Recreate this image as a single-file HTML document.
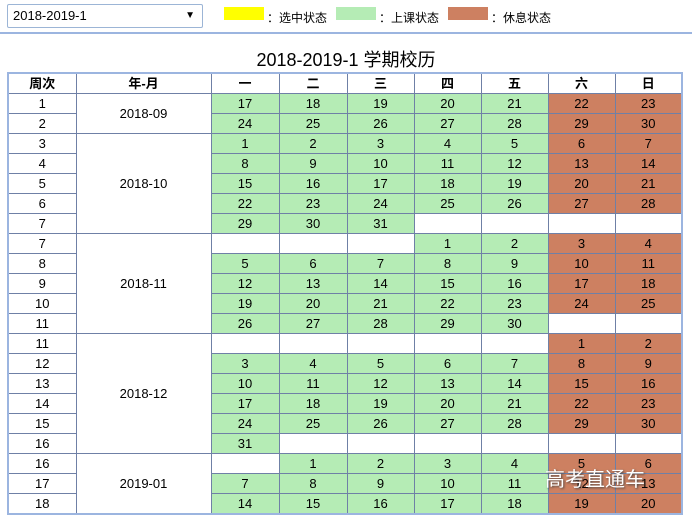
<!DOCTYPE html>
<html><head><meta charset="utf-8"><style>
body{margin:0;width:692px;height:515px;background:#fff;font-family:"Liberation Sans","Noto Sans CJK SC",sans-serif;position:relative;overflow:hidden;color:#000}
.sel{position:absolute;left:7px;top:4px;border:1px solid #9cb5d6;border-radius:2px;font-size:13px;line-height:22px;padding-left:5px;box-sizing:border-box;width:196px;height:24px}
.sel span{position:absolute;right:7px;top:0;font-size:10px}
.lb{position:absolute;top:7px;width:40px;height:13px}
.lt{position:absolute;top:9px;font-size:12px}
.hr{position:absolute;left:0;top:32px;width:692px;height:2px;background:#9cb5e0}
.title{position:absolute;left:0;width:692px;top:46px;text-align:center;font-size:18px}
table{position:absolute;left:7px;top:72px;border-collapse:collapse;border:2px solid #9cb5e0;table-layout:fixed;font-size:13px}
td,th{border:1px solid #6f80a6;height:19px;padding:0;text-align:center;line-height:18px}
th{font-weight:bold}
.g{background:#b5ecb5}.r{background:#cd8061}
.wm{position:absolute;left:545px;top:463px;font-size:20px;color:#fff;text-shadow:1px 1px 2px #444}
</style></head><body>
<div class="sel">2018-2019-1<span>▼</span></div>
<div class="lb" style="left:224px;background:#ffff00"></div><div class="lt" style="left:267px">：选中状态</div>
<div class="lb" style="left:336px;background:#b5ecb5"></div><div class="lt" style="left:379px">：上课状态</div>
<div class="lb" style="left:448px;background:#cd8061"></div><div class="lt" style="left:491px">：休息状态</div>
<div class="hr"></div>
<div class="title">2018-2019-1 学期校历</div>
<table>
<colgroup><col style="width:68px"><col style="width:135px"><col style="width:68px"><col style="width:68px"><col style="width:67px"><col style="width:67px"><col style="width:67px"><col style="width:67px"><col style="width:67px"></colgroup>
<tr><th>周次</th><th>年-月</th><th>一</th><th>二</th><th>三</th><th>四</th><th>五</th><th>六</th><th>日</th></tr>
<tr><td>1</td><td rowspan="2">2018-09</td><td class="g">17</td><td class="g">18</td><td class="g">19</td><td class="g">20</td><td class="g">21</td><td class="r">22</td><td class="r">23</td></tr>
<tr><td>2</td><td class="g">24</td><td class="g">25</td><td class="g">26</td><td class="g">27</td><td class="g">28</td><td class="r">29</td><td class="r">30</td></tr>
<tr><td>3</td><td rowspan="5">2018-10</td><td class="g">1</td><td class="g">2</td><td class="g">3</td><td class="g">4</td><td class="g">5</td><td class="r">6</td><td class="r">7</td></tr>
<tr><td>4</td><td class="g">8</td><td class="g">9</td><td class="g">10</td><td class="g">11</td><td class="g">12</td><td class="r">13</td><td class="r">14</td></tr>
<tr><td>5</td><td class="g">15</td><td class="g">16</td><td class="g">17</td><td class="g">18</td><td class="g">19</td><td class="r">20</td><td class="r">21</td></tr>
<tr><td>6</td><td class="g">22</td><td class="g">23</td><td class="g">24</td><td class="g">25</td><td class="g">26</td><td class="r">27</td><td class="r">28</td></tr>
<tr><td>7</td><td class="g">29</td><td class="g">30</td><td class="g">31</td><td></td><td></td><td></td><td></td></tr>
<tr><td>7</td><td rowspan="5">2018-11</td><td></td><td></td><td></td><td class="g">1</td><td class="g">2</td><td class="r">3</td><td class="r">4</td></tr>
<tr><td>8</td><td class="g">5</td><td class="g">6</td><td class="g">7</td><td class="g">8</td><td class="g">9</td><td class="r">10</td><td class="r">11</td></tr>
<tr><td>9</td><td class="g">12</td><td class="g">13</td><td class="g">14</td><td class="g">15</td><td class="g">16</td><td class="r">17</td><td class="r">18</td></tr>
<tr><td>10</td><td class="g">19</td><td class="g">20</td><td class="g">21</td><td class="g">22</td><td class="g">23</td><td class="r">24</td><td class="r">25</td></tr>
<tr><td>11</td><td class="g">26</td><td class="g">27</td><td class="g">28</td><td class="g">29</td><td class="g">30</td><td></td><td></td></tr>
<tr><td>11</td><td rowspan="6">2018-12</td><td></td><td></td><td></td><td></td><td></td><td class="r">1</td><td class="r">2</td></tr>
<tr><td>12</td><td class="g">3</td><td class="g">4</td><td class="g">5</td><td class="g">6</td><td class="g">7</td><td class="r">8</td><td class="r">9</td></tr>
<tr><td>13</td><td class="g">10</td><td class="g">11</td><td class="g">12</td><td class="g">13</td><td class="g">14</td><td class="r">15</td><td class="r">16</td></tr>
<tr><td>14</td><td class="g">17</td><td class="g">18</td><td class="g">19</td><td class="g">20</td><td class="g">21</td><td class="r">22</td><td class="r">23</td></tr>
<tr><td>15</td><td class="g">24</td><td class="g">25</td><td class="g">26</td><td class="g">27</td><td class="g">28</td><td class="r">29</td><td class="r">30</td></tr>
<tr><td>16</td><td class="g">31</td><td></td><td></td><td></td><td></td><td></td><td></td></tr>
<tr><td>16</td><td rowspan="3">2019-01</td><td></td><td class="g">1</td><td class="g">2</td><td class="g">3</td><td class="g">4</td><td class="r">5</td><td class="r">6</td></tr>
<tr><td>17</td><td class="g">7</td><td class="g">8</td><td class="g">9</td><td class="g">10</td><td class="g">11</td><td class="r">12</td><td class="r">13</td></tr>
<tr><td>18</td><td class="g">14</td><td class="g">15</td><td class="g">16</td><td class="g">17</td><td class="g">18</td><td class="r">19</td><td class="r">20</td></tr>
</table>
<div class="wm">高考直通车</div>
</body></html>
